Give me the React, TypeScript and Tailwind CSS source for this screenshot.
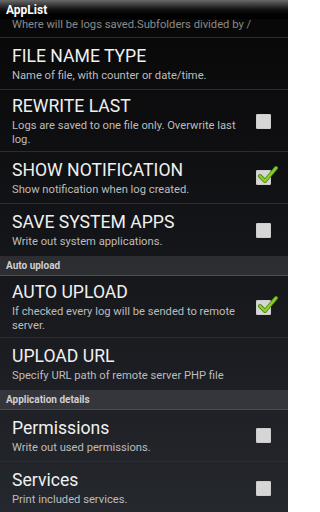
import React from "react";

type Pref = { title: string; summary: string; check?: boolean; checked?: boolean; two?: boolean; last?: boolean };

const GENERAL: Pref[] = [
  { title: "FILE NAME TYPE", summary: "Name of file, with counter or date/time." },
  { title: "REWRITE LAST", summary: "Logs are saved to one file only. Overwrite last log.", check: true, two: true },
  { title: "SHOW NOTIFICATION", summary: "Show notification when log created.", check: true, checked: true },
  { title: "SAVE SYSTEM APPS", summary: "Write out system applications.", check: true, last: true },
];

const UPLOAD: Pref[] = [
  { title: "AUTO UPLOAD", summary: "If checked every log will be sended to remote server.", check: true, checked: true, two: true },
  { title: "UPLOAD URL", summary: "Specify URL path of remote server PHP file", last: true },
];

const DETAILS: Pref[] = [
  { title: "Permissions", summary: "Write out used permissions.", check: true },
  { title: "Services", summary: "Print included services.", check: true, last: true },
];

function CheckBox({ checked }: { checked?: boolean }) {
  return (
    <div className="relative w-[15px] h-[15px] rounded-[1px] bg-[#d6d6d6] shadow-[inset_0_0_1px_rgba(0,0,0,0.4)]">
      {checked && (
        <svg className="absolute left-[1px] top-[-6px]" width="21" height="21" viewBox="0 0 21 21">
          <path d="M3 12 L8 17 L19 4" fill="none" stroke="#4f8a10" strokeWidth="4" strokeLinecap="round" strokeLinejoin="round" />
          <path d="M3 12 L8 17 L19 4" fill="none" stroke="#8ccd2a" strokeWidth="2.4" strokeLinecap="round" strokeLinejoin="round" />
        </svg>
      )}
    </div>
  );
}

function Row({ p }: { p: Pref }) {
  return (
    <div
      className={`flex items-center pl-3 ${p.two ? "pt-[5px] pb-[4px]" : "min-h-[52px]"} ${p.last ? "" : "border-b border-[#2c2d30]"}`}
    >
      <div className="flex-1 pr-[2px]">
        <div className="text-[17.6px] leading-[22px] text-[#f0f0f0]">{p.title}</div>
        <div className="mt-[2px] text-[11.2px] leading-[14px] text-[#bcbcbc]">{p.summary}</div>
      </div>
      <div className="w-[42px] flex justify-start pl-[10px] shrink-0">{p.check && <CheckBox checked={p.checked} />}</div>
    </div>
  );
}

function Category({ label }: { label: string }) {
  return (
    <div className="h-[20px] pl-[6px] flex items-center bg-white/10 border-b border-[#4a4c50] text-[10px] font-bold text-[#cfcfcf]">
      {label}
    </div>
  );
}

export default function App() {
  return (
    <div
      className="w-[288px] h-[512px] overflow-hidden flex flex-col bg-gradient-to-b from-[#070707] via-[#15161a] to-[#25282e]"
      style={{ fontFamily: "Roboto, 'Noto Sans', sans-serif" }}
    >
      {/* title bar */}
      <div className="h-[19px] shrink-0 pl-[6px] flex items-center bg-gradient-to-b from-[#6a6a6a] via-[#141414] to-black text-[12px] font-bold text-white">
        AppList
      </div>
      <div className="flex-1 overflow-hidden">
        {/* cut-off row at the top of the list */}
        <div className="h-[19px] overflow-hidden border-b border-[#2c2d30] pl-3">
          <div className="text-[11.2px] leading-[14px] text-[#8a8a8a] -mt-[1px]">Where will be logs saved.Subfolders divided by /</div>
        </div>
        {GENERAL.map(p => <Row key={p.title} p={p} />)}
        <Category label="Auto upload" />
        {UPLOAD.map(p => <Row key={p.title} p={p} />)}
        <Category label="Application details" />
        {DETAILS.map(p => <Row key={p.title} p={p} />)}
      </div>
    </div>
  );
}
